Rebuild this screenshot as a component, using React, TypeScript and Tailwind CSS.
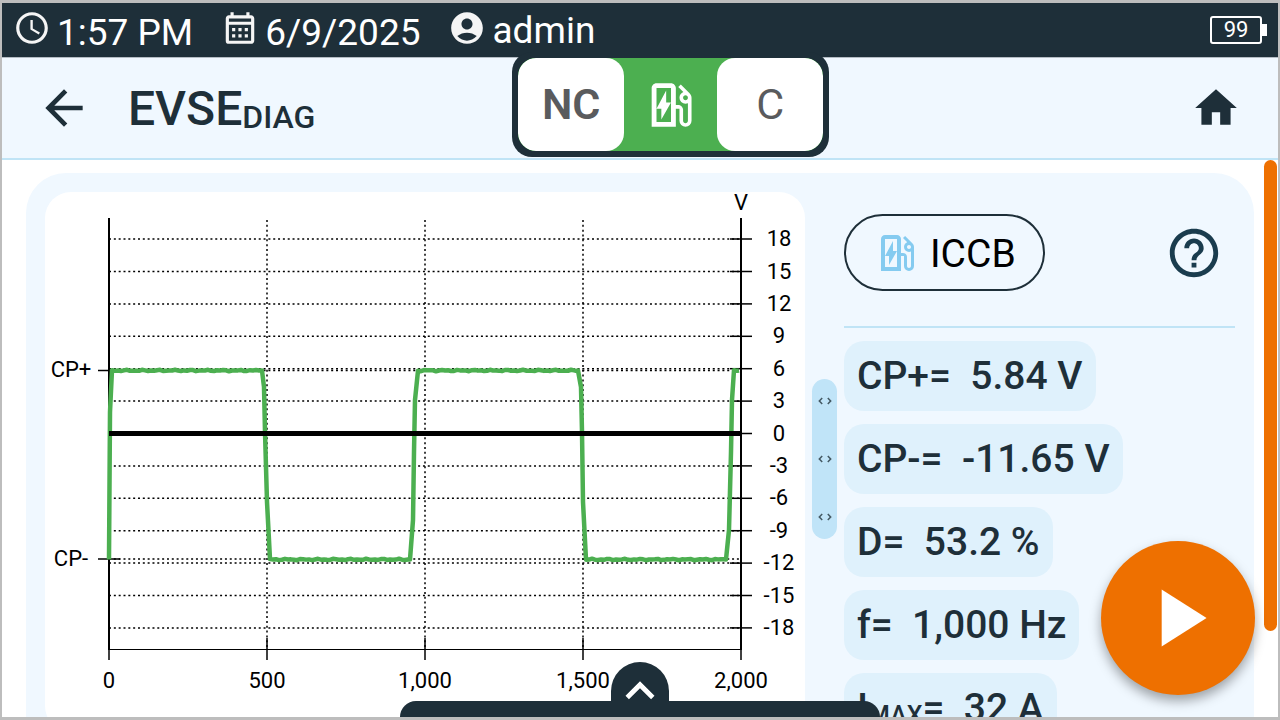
import type { ReactNode } from "react";
import {
  MdAccessTime,
  MdAccountCircle,
  MdArrowBack,
  MdHelpOutline,
  MdHome,
  MdKeyboardArrowUp,
  MdOutlineCalendarMonth,
  MdOutlineEvStation,
  MdPlayArrow,
  MdUnfoldMore,
} from "react-icons/md";

const ZERO_Y = 241.5;
const PX_PER_VOLT = 10.8;
const LEFT = 64;
const RIGHT = 696;

const volts = [18, 15, 12, 9, 6, 3, 0, -3, -6, -9, -12, -15, -18];
const times = [0, 500, 1000, 1500, 2000];

const toX = (t: number) => LEFT + (t / 2000) * (RIGHT - LEFT);
const toY = (v: number) => ZERO_Y - v * PX_PER_VOLT;

const CP_HIGH = 178.5;
const CP_LOW = 367.5;

// flat part of the signal with a little measurement noise
function plateau(from: number, to: number, y: number) {
  const pts: string[] = [];
  let i = 0;
  for (let x = from; x < to; x += 3) {
    const noise = Math.sin(i * 2.3) * 0.4 + Math.sin(i * 5.1 + from) * 0.4;
    pts.push(`${x},${(y + noise).toFixed(2)}`);
    i++;
  }
  pts.push(`${to},${y}`);
  return pts.join(" ");
}

const signal = [
  `64,${CP_LOW}`,
  "65,220",
  plateau(67, 217, CP_HIGH),
  "219,195 220,240 222,310",
  plateau(225, 365, CP_LOW),
  "368,328 369,260 370,208",
  plateau(373, 533, CP_HIGH),
  "536,195 537,240 538,310",
  plateau(541, 681, CP_LOW),
  "684,338 686,260 687,208",
  plateau(689, 694, CP_HIGH),
].join(" ");

function SignalChart() {
  const dots = { stroke: "#000", strokeWidth: 1.5, strokeDasharray: "2 2.83" };
  return (
    <svg
      viewBox="0 0 760 540"
      className="block w-full"
      fontSize="22"
      fill="#000"
      role="img"
      aria-label="CP"
    >
      {volts.map((v) => (
        <g key={v}>
          {v !== 0 && <line x1={LEFT} x2={RIGHT} y1={toY(v)} y2={toY(v)} {...dots} />}
          <line x1={RIGHT - 11} x2={RIGHT + 11} y1={toY(v)} y2={toY(v)} stroke="#000" strokeWidth="1.5" />
          <text x="734" y={toY(v) + 7} textAnchor="middle">{v}</text>
        </g>
      ))}
      {times.map((t) => (
        <g key={t}>
          {t > 0 && t < 2000 && <line x1={toX(t)} x2={toX(t)} y1="28" y2="457" {...dots} />}
          <line x1={toX(t)} x2={toX(t)} y1="446" y2="468" stroke="#000" strokeWidth="1.5" />
          <text x={toX(t)} y="496" textAnchor="middle">{t.toLocaleString("en-US")}</text>
        </g>
      ))}
      <text x={RIGHT} y="18" textAnchor="middle">V</text>

      {/* CP levels */}
      {[CP_HIGH, CP_LOW - 0.5].map((y) => (
        <g key={y}>
          <line x1={LEFT} x2={RIGHT} y1={y} y2={y} {...dots} />
          <line x1={LEFT - 11} x2={LEFT + 11} y1={y} y2={y} stroke="#000" strokeWidth="1.5" />
        </g>
      ))}
      <text x="26" y="185" textAnchor="middle">CP+</text>
      <text x="26" y="374" textAnchor="middle">CP-</text>

      <path d={`M${LEFT} 26V458M${RIGHT} 26V458`} stroke="#000" strokeWidth="2" />
      <path d={`M${LEFT} 457.5H${RIGHT}`} stroke="#000" strokeWidth="1" />
      <polyline points={signal} fill="none" stroke="#4caf50" strokeWidth="4.5" strokeLinejoin="round" />
      <line x1={LEFT} x2={RIGHT} y1={ZERO_Y} y2={ZERO_Y} stroke="#000" strokeWidth="5" />
    </svg>
  );
}

function Reading({ label, value }: { label: ReactNode; value: string }) {
  return (
    <div className="flex h-[70px] items-center whitespace-pre rounded-[20px] bg-[#dff1fc] px-[13px] text-[39px] font-medium">
      {label}=  {value}
    </div>
  );
}

function StatusBar() {
  return (
    <div className="flex h-[54px] shrink-0 items-center bg-[#1e2f39] pr-[11px] pl-[11px] text-[37px] text-white">
      <div className="flex items-center gap-[6px]">
        <MdAccessTime className="mb-1 size-[38px] text-[#f5f5f5]" />
        <span className="pt-1">1:57 PM</span>
      </div>
      <div className="ml-7 flex items-center gap-[6px]">
        <MdOutlineCalendarMonth className="mb-1 size-[38px] text-[#f5f5f5]" />
        <span className="pt-1">6/9/2025</span>
      </div>
      <div className="ml-7 flex items-center gap-[6px]">
        <MdAccountCircle className="mb-1 size-[38px] text-[#f5f5f5]" />
        <span>admin</span>
      </div>
      <div className="ml-auto flex items-center">
        <div className="flex h-7 w-[52px] items-center justify-center rounded-[3px] border-2 border-white text-[22px]">
          99
        </div>
        <div className="h-3 w-[5px] bg-white" />
      </div>
    </div>
  );
}

function Header() {
  return (
    <header className="flex h-[103px] shrink-0 border-t border-b-2 border-t-[#b4bcc4] border-b-[#c0e4f6] bg-[#f0f8ff]">
      <div className="flex flex-[510_1_0%] items-center gap-9 pl-[34px]">
        <button type="button" aria-label="Back">
          <MdArrowBack className="size-14" />
        </button>
        <h1 className="pt-px text-[48px] font-medium">
          EVSE<span className="relative top-[3px] text-[32px]">DIAG</span>
        </h1>
      </div>
      <div className="relative -mt-[6px] h-[105px] rounded-[20px] bg-[#1e2f39] px-[6px] pt-[6px] pb-[6px]">
        <div className="flex h-[93px] overflow-hidden rounded-[18px] bg-[#4caf50] text-[#5a5b5d]">
          <button type="button" className="w-[106px] rounded-[18px] bg-white text-[43px] font-semibold">
            NC
          </button>
          <div className="flex w-[93px] items-center justify-center text-white">
            <MdOutlineEvStation className="size-[58px]" />
          </div>
          <button type="button" className="w-[106px] rounded-[18px] bg-white text-[43px]">
            C
          </button>
        </div>
      </div>
      <div className="flex flex-[441_1_0%] items-center justify-end pr-[37px]">
        <button type="button" aria-label="Home">
          <MdHome className="size-[50px]" />
        </button>
      </div>
    </header>
  );
}

export default function App() {
  return (
    <div className="relative flex h-screen flex-col overflow-hidden border-x-2 border-y-[3px] border-[#bdbdbd] bg-white font-[Roboto,sans-serif] leading-none text-[#1e2f39]">
      <StatusBar />
      <Header />

      <main className="flex min-h-0 flex-1 items-start overflow-hidden">
        <section className="mt-[13px] mr-[10px] ml-6 flex flex-1 rounded-[40px] bg-[#f0f8ff] p-[19px]">
          <div className="flex-[760_1_0%] self-start overflow-hidden rounded-[26px] bg-white">
            <SignalChart />
          </div>

          <div className="mx-[7px] mt-[187px] flex h-40 w-[25px] flex-col items-center justify-center gap-10 rounded-full bg-[#c0e4f8] text-[#455a64]">
            <MdUnfoldMore className="size-[18px] rotate-90" />
            <MdUnfoldMore className="size-[18px] rotate-90" />
            <MdUnfoldMore className="size-[18px] rotate-90" />
          </div>

          <div className="flex-[391_1_0%]">
            <div className="flex items-center justify-between border-b-2 border-[#c0e4f6] pt-[22px] pb-[35px]">
              <button
                type="button"
                className="flex h-[77px] items-center gap-[9px] rounded-full border-2 border-[#1e2f39] px-[27px] text-[39px] text-black"
              >
                <MdOutlineEvStation className="size-12 text-[#85cbf0]" />
                <span className="pt-1">ICCB</span>
              </button>
              <button type="button" aria-label="Help" className="mr-3 text-[#1a3c4e]">
                <MdHelpOutline className="size-[58px]" />
              </button>
            </div>
            <div className="mt-[13px] flex flex-col items-start gap-[13px]">
              <Reading label="CP+" value="5.84 V" />
              <Reading label="CP-" value="-11.65 V" />
              <Reading label="D" value="53.2 %" />
              <Reading label="f" value="1,000 Hz" />
              <Reading
                label={
                  <>
                    I<span className="pt-[14px] text-[25px]">MAX</span>
                  </>
                }
                value="32 A"
              />
            </div>
          </div>
        </section>
        <div className="mr-px h-[471px] w-[13px] rounded-full bg-[#ee7000]" />
      </main>

      {/* start button floats over the readings */}
      <button
        type="button"
        aria-label="Start"
        className="absolute right-[23px] bottom-[22px] flex size-[154px] items-center justify-center rounded-full bg-[#ee7000] text-white shadow-[0_6px_12px_rgba(0,0,0,0.35)]"
      >
        <MdPlayArrow className="size-[98px]" />
      </button>

      {/* bottom drawer handle */}
      <div className="absolute inset-x-0 bottom-0 flex flex-col items-center">
        <button type="button" aria-label="Open drawer" className="h-[39px] overflow-hidden rounded-t-[29px] bg-[#1e2f39] text-white">
          <MdKeyboardArrowUp className="size-[58px]" />
        </button>
        <div className="h-4 w-[480px] rounded-t-[20px] bg-[#1e2f39]" />
      </div>
    </div>
  );
}
